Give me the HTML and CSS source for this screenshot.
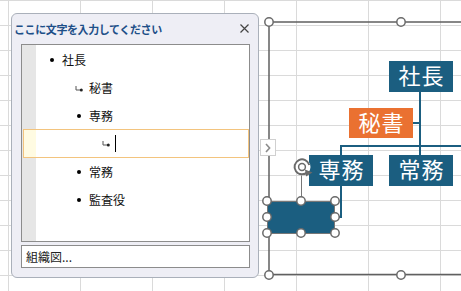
FILE: index.html
```html
<!DOCTYPE html>
<html lang="ja">
<head>
<meta charset="utf-8">
<title>SmartArt</title>
<link rel="stylesheet" href="styles.css">
</head>
<body>
<div class="sheet">
  <svg class="art-lines" width="461" height="291" viewBox="0 0 461 291">
    <g class="frame">
      <path d="M269 22 H461 M269 22 V274.5 H461"/>
    </g>
    <g class="conn">
      <path d="M420 91 V155"/>
      <path d="M340 146 H461"/>
      <path d="M413 123 H421"/>
      <path d="M341 146 V155"/>
      <path d="M341 186 V217 H334"/>
    </g>
  </svg>

  <div class="node n-ceo">社長</div>
  <div class="node n-sec">秘書</div>
  <div class="node n-exec">専務</div>
  <div class="node n-mgr">常務</div>
  <div class="node n-new"></div>

  <svg class="handles" width="461" height="291" viewBox="0 0 461 291">
    <g class="hd">
      <circle cx="269" cy="22" r="4.2"/>
      <circle cx="401" cy="22" r="4.2"/>
      <circle cx="269" cy="275" r="4.2"/>
      <circle cx="401" cy="275" r="4.2"/>
      <circle cx="269" cy="148" r="4.2"/>
    </g>
    <rect class="sel" x="267.5" y="201.5" width="67" height="32"/>
    <path class="rot-line" d="M301.5 175 V197"/>
    <g class="hd">
      <circle cx="267" cy="201" r="4.2"/>
      <circle cx="301" cy="201" r="4.2"/>
      <circle cx="335" cy="201" r="4.2"/>
      <circle cx="267" cy="217" r="4.2"/>
      <circle cx="335" cy="217" r="4.2"/>
      <circle cx="267" cy="233" r="4.2"/>
      <circle cx="301" cy="233" r="4.2"/>
      <circle cx="335" cy="233" r="4.2"/>
    </g>
    <g class="rot">
      <circle class="rot-bg" cx="302" cy="167" r="8.5"/>
      <path class="rot-arc" d="M307.5 172 A7.5 7.5 0 1 1 309.3 165"/>
      <circle class="rot-in" cx="302" cy="167" r="3.4"/>
      <path class="rot-head" d="M305 169.5 L312.5 172.5 L306 176.5 Z"/>
    </g>
  </svg>

  <div class="tab">
    <svg width="6" height="10" viewBox="0 0 6 10"><polyline points="1,1 4.6,5 1,9"/></svg>
  </div>

  <div class="panel">
    <div class="panel-head">
      <span class="panel-title">ここに文字を入力してください</span>
      <svg class="close" width="9" height="9" viewBox="0 0 9 9"><path d="M0.5 0.5 L8.5 8.5 M8.5 0.5 L0.5 8.5"/></svg>
    </div>
    <div class="textarea">
      <ul class="outline">
        <li class="row lv1"><span class="dot"></span><span>社長</span></li>
        <li class="row lv2 asst"><svg class="amark" width="8" height="7" viewBox="0 0 8 7"><path d="M1 1 V5 H5"/><circle cx="6.3" cy="5" r="1.5"/></svg><span>秘書</span></li>
        <li class="row lv2"><span class="dot"></span><span>専務</span></li>
        <li class="row active"><svg class="amark" width="8" height="7" viewBox="0 0 8 7"><path d="M1 1 V5 H5"/><circle cx="6.3" cy="5" r="1.5"/></svg><span class="caret"></span></li>
        <li class="row lv2"><span class="dot"></span><span>常務</span></li>
        <li class="row lv2"><span class="dot"></span><span>監査役</span></li>
      </ul>
    </div>
    <div class="field">組織図...</div>
  </div>
</div>
</body>
</html>
```
FILE: styles.css
```css
* { box-sizing: border-box; }
html, body { margin: 0; padding: 0; }
body {
  width: 461px;
  height: 291px;
  overflow: hidden;
  font-family: "Noto Sans CJK JP", "Noto Sans", sans-serif;
}
.sheet {
  position: relative;
  width: 461px;
  height: 291px;
  background-color: #fff;
  background-image:
    linear-gradient(to right, #dadada 1px, transparent 1px),
    linear-gradient(to bottom, #dadada 1px, transparent 1px);
  background-size: 72px 100%, 100% 25px;
  background-position: 8px 0, 0 0;
}

/* diagram canvas */
.art-lines, .handles {
  position: absolute;
  left: 0;
  top: 0;
}
.art-lines { z-index: 1; }
.handles { z-index: 3; }
.frame path { fill: none; stroke: #606060; stroke-width: 1.5; }
.conn path { fill: none; stroke: #1b5e80; stroke-width: 2; }
.hd circle { fill: #fff; stroke: #6a6a6a; stroke-width: 1.5; }
.sel { fill: none; stroke: #777; stroke-width: 1; }
.rot-line { stroke: #777; stroke-width: 1; fill: none; }
.rot-bg { fill: #fff; stroke: none; }
.rot-arc { fill: none; stroke: #6a6a6a; stroke-width: 2; }
.rot-in { fill: none; stroke: #6a6a6a; stroke-width: 1.5; }
.rot-head { fill: #6a6a6a; }

.node {
  position: absolute;
  z-index: 2;
  width: 64px;
  height: 31px;
  display: flex;
  align-items: center;
  justify-content: center;
  padding: 0 0 5px 1px;
  background: #1b5e80;
  color: #fff;
  font-size: 22px;
  line-height: 1;
  letter-spacing: 1px;
}
.n-ceo { left: 389px; top: 61px; }
.n-sec { left: 349px; top: 108px; height: 30px; background: #ea7131; }
.n-exec { left: 309px; top: 155px; }
.n-mgr { left: 389px; top: 155px; }
.n-new { left: 268px; top: 202px; width: 66px; height: 31px; }

/* collapse tab */
.tab {
  position: absolute;
  z-index: 4;
  left: 260px;
  top: 139px;
  width: 16px;
  height: 17px;
  border: 1px solid #d0d0d0;
  background: #fff;
  display: flex;
  align-items: center;
  justify-content: center;
}
.tab polyline { fill: none; stroke: #8c8c8c; stroke-width: 1.6; }

/* text pane */
.panel {
  position: absolute;
  z-index: 5;
  left: 11px;
  top: 13px;
  width: 248px;
  height: 265px;
  border: 1px solid #aab0ba;
  border-radius: 6px;
  background: #eeeef5;
  padding: 0 8px 9px 2px;
  display: flex;
  flex-direction: column;
}
.panel-head {
  height: 30px;
  display: flex;
  align-items: center;
  justify-content: space-between;
  padding-bottom: 1px;
}
.panel-title {
  font-size: 11px;
  font-weight: 700;
  color: #1d4f88;
  letter-spacing: -0.4px;
  line-height: 14px;
}
.close { margin-right: 1px; }
.close path { stroke: #444; stroke-width: 1.2; fill: none; }

.textarea {
  margin-left: 7px;
  height: 198px;
  border: 1px solid #8c8c8c;
  background: linear-gradient(to right, #e6e6e6 14px, #fff 14px);
  padding-top: 1px;
}
.outline {
  list-style: none;
  margin: 0;
  padding: 0;
}
.row {
  height: 28px;
  display: flex;
  align-items: center;
  font-size: 12px;
  line-height: 1;
  color: #111;
}
.lv1 { padding-left: 28px; }
.lv2 { padding-left: 55px; }
.lv2.asst { padding-left: 53px; }
.dot {
  width: 4px;
  height: 4px;
  border-radius: 50%;
  background: #000;
  margin-right: 8px;
}
.amark { margin-right: 6px; }
.amark path { fill: none; stroke: #555; stroke-width: 1; }
.amark circle { fill: #222; }
.row.active {
  height: 29px;
  margin-top: -1px;
  margin-left: 1px;
  border: 1px solid #f3c47e;
  background: linear-gradient(to right, #fffbe2 12px, #fff 12px);
  padding-left: 78px;
}
.row.active .amark { margin-right: 5px; }
.caret {
  width: 1px;
  height: 17px;
  background: #000;
}

.field {
  margin-top: 3px;
  margin-left: 7px;
  height: 23px;
  border: 1px solid #8c8c8c;
  background: #fff;
  font-size: 12px;
  line-height: 1;
  color: #222;
  padding-left: 4px;
  display: flex;
  align-items: center;
}
```
